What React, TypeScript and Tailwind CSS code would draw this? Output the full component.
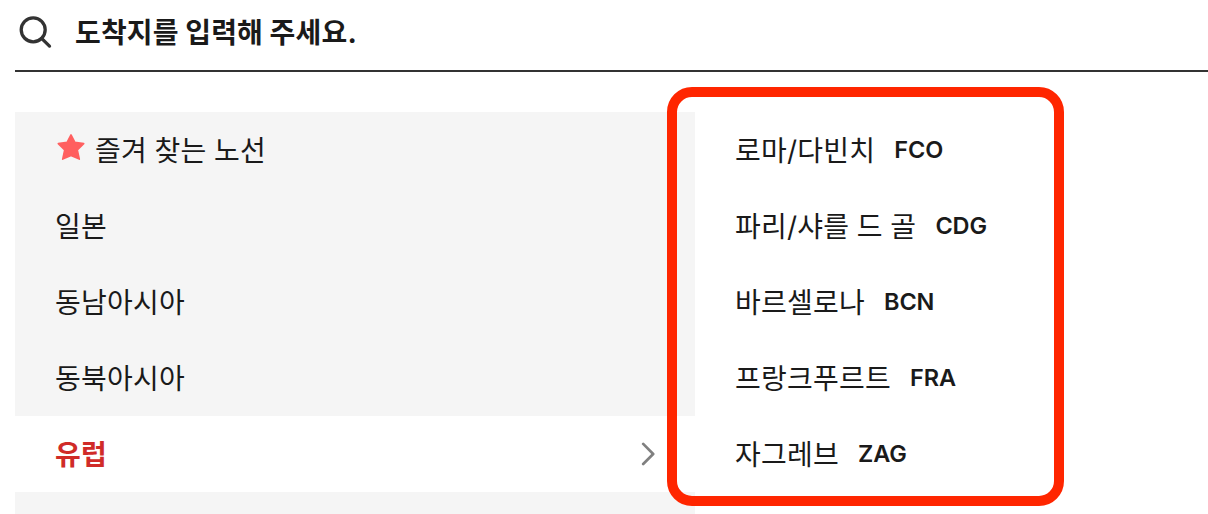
import { clsx } from "clsx";

const regions = ["일본", "동남아시아", "동북아시아", "유럽"];

const airports = [
  { name: "로마/다빈치", code: "FCO" },
  { name: "파리/샤를 드 골", code: "CDG" },
  { name: "바르셀로나", code: "BCN" },
  { name: "프랑크푸르트", code: "FRA" },
  { name: "자그레브", code: "ZAG" },
];

export default function App() {
  const selected = "유럽";

  return (
    <div className="h-[514px] overflow-hidden bg-white pl-[15px] font-[Inter,'Noto_Sans_CJK_KR',sans-serif] text-[28px] tracking-[0.24px] [word-spacing:-0.6px] text-[#1a1a1a]">
      {/* Search */}
      <div className="flex h-[72px] items-center border-b-2 border-[#333] pb-1">
        <svg className="ml-1 size-9 shrink-0" viewBox="0 0 36 36" fill="none" stroke="#333" strokeWidth="3.3">
          <circle cx="14.2" cy="14.8" r="12" />
          <path d="M22.600 23.400l7.900 7.700" strokeLinecap="round" />
        </svg>
        <span className="ml-5 font-bold tracking-[0.16px] [word-spacing:-0.2px]">도착지를 입력해 주세요.</span>
      </div>

      <div className="mt-10 flex">
        {/* Regions */}
        <ul className="w-[680px] shrink-0 bg-[#f5f5f5]">
          <li className="flex h-[76px] items-center pl-10">
            <svg
              className="mr-2.5 mb-1.5 ml-0.5 size-7"
              viewBox="0 0 28 28"
              fill="#ff5f5f"
              stroke="#ff5f5f"
              strokeWidth="1.6"
              strokeLinejoin="round"
            >
              <path d="M14 1.900l3.900 7.500 8.800 1.200-6.400 6.400 2 9.100-8.300-3.500-8.300 3.500 2-9.100-6.400-6.400 8.800-1.200z" />
            </svg>
            <span className="pt-0.5">즐겨 찾는 노선</span>
          </li>
          {regions.map((region) => (
            <li
              key={region}
              className={clsx(
                "flex h-[76px] items-center justify-between px-10",
                region === selected && "bg-white font-bold text-[#d02b28]"
              )}
            >
              <span className="pt-0.5">{region}</span>
              {region === selected && (
                <svg
                  className="h-6 w-3.5"
                  viewBox="0 0 14 24"
                  fill="none"
                  stroke="#808080"
                  strokeWidth="2.7"
                  strokeLinecap="round"
                  strokeLinejoin="round"
                >
                  <path d="M2.200 1.900L12.200 12 2.200 22" />
                </svg>
              )}
            </li>
          ))}
          <li className="h-[76px]" />
        </ul>

        {/* Airports */}
        <div className="-mt-[25px] -ml-7 h-[419px] w-[397px] rounded-[25px] border-[10px] border-[#ff2600] pt-[15px] pl-[58px]">
          {airports.map((airport) => (
            <div key={airport.code} className="flex h-[76px] items-center gap-[19px]">
              <span className="pt-0.5">{airport.name}</span>
              <span className="text-[23.5px] font-semibold tracking-[-0.1px]">{airport.code}</span>
            </div>
          ))}
        </div>
      </div>
    </div>
  );
}
